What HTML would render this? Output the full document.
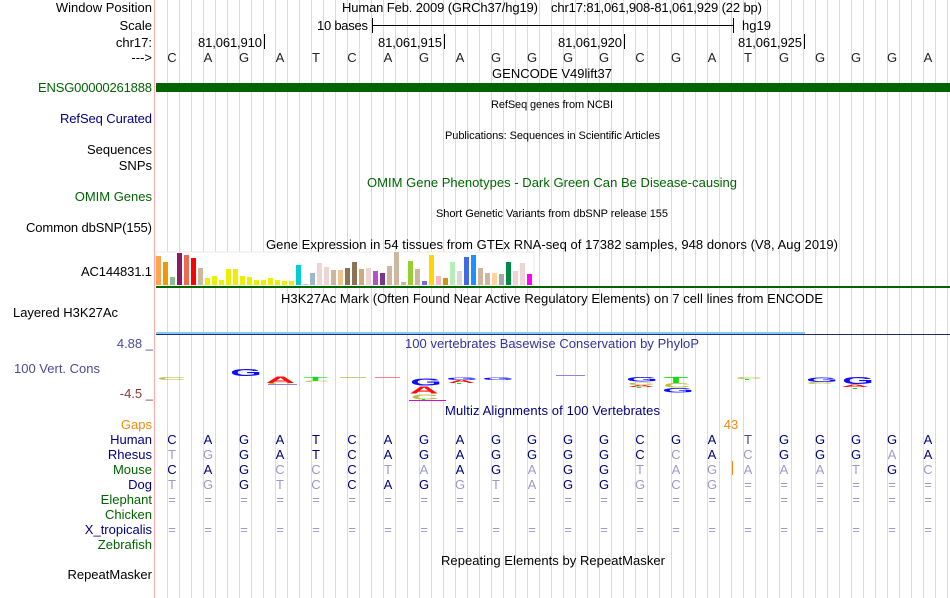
<!DOCTYPE html>
<html><head><meta charset="utf-8"><style>
html,body{margin:0;padding:0;background:#fff;width:950px;height:598px;overflow:hidden}
svg{display:block}
text{font-family:"Liberation Sans",sans-serif;font-size:13px;fill:#000}
.r{text-anchor:end}.m{text-anchor:middle}
.s{font-size:11px}
.n{fill:#000080}.g{fill:#006400}.o{fill:#ee8a10}
.d{fill:#000080;text-anchor:middle}.l{fill:#9a9ac8;text-anchor:middle}
.k{fill:#222;text-anchor:middle}
.L{font-size:12px;font-weight:bold;text-anchor:middle}
.B{fill:#0000ff}.R{fill:#ff0000}.Y{fill:#b8b83c}.T{fill:#00e000}
.bars rect{width:5px}
</style></head><body>
<svg width="950" height="598" viewBox="0 0 950 598" xmlns="http://www.w3.org/2000/svg">
<defs><pattern id="p" x="167" y="0" width="12" height="598" patternUnits="userSpaceOnUse"><rect x="0" y="0" width="1" height="598" fill="#d9d8f2"/></pattern></defs>
<rect x="167" y="0" width="781" height="598" fill="url(#p)"/>
<rect x="154" y="0" width="1" height="598" fill="#ffaaaa"/>

<!-- left labels -->
<text class="r" x="152" y="12">Window Position</text>
<text class="r" x="152" y="30">Scale</text>
<text class="r" x="152" y="47">chr17:</text>
<text class="r" x="152" y="62">---&gt;</text>
<text class="g" x="38" y="92" textLength="114">ENSG00000261888</text>
<text class="n" x="60" y="123" textLength="92">RefSeq Curated</text>
<text class="r" x="152" y="154">Sequences</text>
<text class="r" x="152" y="170">SNPs</text>
<text class="r g" x="152" y="201">OMIM Genes</text>
<text x="26" y="232" textLength="126">Common dbSNP(155)</text>
<text x="81" y="276" textLength="71">AC144831.1</text>
<text x="13" y="317" textLength="105">Layered H3K27Ac</text>
<text x="14" y="373" style="fill:#4a4a9a">100 Vert. Cons</text>
<text class="r" x="153" y="348" style="fill:#4a4a9a">4.88 _</text>
<text class="r" x="153" y="398" style="fill:#8b3a3a">-4.5 _</text>
<text class="r o" x="152" y="429">Gaps</text>
<text class="r n" x="152" y="444">Human</text>
<text class="r n" x="152" y="459">Rhesus</text>
<text class="r g" x="152" y="474">Mouse</text>
<text class="r n" x="152" y="489">Dog</text>
<text class="r g" x="152" y="504">Elephant</text>
<text class="r g" x="152" y="519">Chicken</text>
<text class="r n" x="152" y="534">X_tropicalis</text>
<text class="r g" x="152" y="549">Zebrafish</text>
<text class="r" x="152" y="579">RepeatMasker</text>

<!-- header -->
<text x="342" y="12" textLength="196">Human Feb. 2009 (GRCh37/hg19)</text>
<text x="551" y="12" textLength="211">chr17:81,061,908-81,061,929 (22 bp)</text>
<text x="317" y="30" textLength="51">10 bases</text>
<text x="742" y="30">hg19</text>
<rect x="372" y="18" width="1" height="15" fill="#000"/>
<rect x="372" y="25" width="361" height="1" fill="#000"/>
<rect x="733" y="18" width="1" height="15" fill="#000"/>
<text x="198" y="47" textLength="64">81,061,910</text><rect x="264" y="34" width="1" height="15" fill="#000"/>
<text x="378" y="47" textLength="64">81,061,915</text><rect x="444" y="34" width="1" height="15" fill="#000"/>
<text x="558" y="47" textLength="64">81,061,920</text><rect x="624" y="34" width="1" height="15" fill="#000"/>
<text x="738" y="47" textLength="64">81,061,925</text><rect x="804" y="34" width="1" height="15" fill="#000"/>
<text class="k" x="172 208 244 280 316 352 388 424 460 496 532 568 604 640 676 712 748 784 820 856 892 928" y="62">CAGATCAGAGGGGCGATGGGGA</text>

<text class="m" x="552" y="78">GENCODE V49lift37</text>
<rect x="156" y="83" width="794" height="9" fill="#006400"/>
<text class="s" x="491" y="108" textLength="122">RefSeq genes from NCBI</text>
<text class="s" x="445" y="139" textLength="215">Publications: Sequences in Scientific Articles</text>
<text class="g" x="367" y="187" textLength="370">OMIM Gene Phenotypes - Dark Green Can Be Disease-causing</text>
<text class="s" x="436" y="217" textLength="232">Short Genetic Variants from dbSNP release 155</text>
<text x="266" y="249" textLength="572">Gene Expression in 54 tissues from GTEx RNA-seq of 17382 samples, 948 donors (V8, Aug 2019)</text>

<!-- GTEx bars -->
<rect x="156" y="252" width="378" height="33" fill="#fff" stroke="#e8e8e8" stroke-width="1"/>
<g>
<rect x="156" y="256" width="5" height="29" fill="#FFA54F"/>
<rect x="163" y="262" width="5" height="23" fill="#EE9A00"/>
<rect x="170" y="277" width="5" height="8" fill="#8FBC8F"/>
<rect x="177" y="253" width="5" height="32" fill="#8B1C62"/>
<rect x="184" y="255" width="5" height="30" fill="#EE6A50"/>
<rect x="191" y="258" width="5" height="27" fill="#FF0000"/>
<rect x="198" y="268" width="5" height="17" fill="#CDB79E"/>
<rect x="205" y="278" width="5" height="7" fill="#EEEE00"/>
<rect x="212" y="276" width="5" height="9" fill="#EEEE00"/>
<rect x="219" y="280" width="5" height="5" fill="#EEEE00"/>
<rect x="226" y="269" width="5" height="16" fill="#EEEE00"/>
<rect x="233" y="269" width="5" height="16" fill="#EEEE00"/>
<rect x="240" y="276" width="5" height="9" fill="#EEEE00"/>
<rect x="247" y="277" width="5" height="8" fill="#EEEE00"/>
<rect x="254" y="280" width="5" height="5" fill="#EEEE00"/>
<rect x="261" y="280" width="5" height="5" fill="#EEEE00"/>
<rect x="268" y="278" width="5" height="7" fill="#EEEE00"/>
<rect x="275" y="280" width="5" height="5" fill="#EEEE00"/>
<rect x="282" y="281" width="5" height="4" fill="#EEEE00"/>
<rect x="289" y="281" width="5" height="4" fill="#EEEE00"/>
<rect x="296" y="265" width="5" height="20" fill="#00CED1"/>
<rect x="303" y="284" width="5" height="1" fill="#B4CDCD"/>
<rect x="310" y="273" width="5" height="12" fill="#9FB6CD"/>
<rect x="317" y="263" width="5" height="22" fill="#EED5D2"/>
<rect x="324" y="267" width="5" height="18" fill="#EED5D2"/>
<rect x="331" y="270" width="5" height="15" fill="#CDB79E"/>
<rect x="338" y="270" width="5" height="15" fill="#EEC591"/>
<rect x="345" y="268" width="5" height="17" fill="#8B7355"/>
<rect x="352" y="262" width="5" height="23" fill="#8B7355"/>
<rect x="359" y="269" width="5" height="16" fill="#CDAA7D"/>
<rect x="366" y="268" width="5" height="17" fill="#EED5D2"/>
<rect x="373" y="271" width="5" height="14" fill="#B452CD"/>
<rect x="380" y="273" width="5" height="12" fill="#7A378B"/>
<rect x="387" y="266" width="5" height="19" fill="#CDB79E"/>
<rect x="394" y="252" width="5" height="33" fill="#CDB79E"/>
<rect x="401" y="282" width="5" height="3" fill="#CDB79E"/>
<rect x="408" y="261" width="5" height="24" fill="#9ACD32"/>
<rect x="415" y="269" width="5" height="16" fill="#CDB79E"/>
<rect x="422" y="281" width="5" height="4" fill="#7A67EE"/>
<rect x="429" y="255" width="5" height="30" fill="#FFD700"/>
<rect x="436" y="276" width="5" height="9" fill="#FFB6C1"/>
<rect x="443" y="278" width="5" height="7" fill="#CD950C"/>
<rect x="450" y="262" width="5" height="23" fill="#B4EEB4"/>
<rect x="457" y="271" width="5" height="14" fill="#D9D9D9"/>
<rect x="464" y="257" width="5" height="28" fill="#4169E1"/>
<rect x="471" y="255" width="5" height="30" fill="#1E90FF"/>
<rect x="478" y="268" width="5" height="17" fill="#CDB79E"/>
<rect x="485" y="273" width="5" height="12" fill="#CDB79E"/>
<rect x="492" y="273" width="5" height="12" fill="#FFD39B"/>
<rect x="499" y="274" width="5" height="11" fill="#A6A6A6"/>
<rect x="506" y="262" width="5" height="23" fill="#008B45"/>
<rect x="513" y="271" width="5" height="14" fill="#EED5D2"/>
<rect x="520" y="263" width="5" height="22" fill="#EED5D2"/>
<rect x="527" y="274" width="5" height="11" fill="#FF00FF"/>
</g>
<rect x="156" y="286" width="794" height="2" fill="#006400"/>

<text x="281" y="303" textLength="542">H3K27Ac Mark (Often Found Near Active Regulatory Elements) on 7 cell lines from ENCODE</text>
<rect x="156" y="332" width="649" height="2" fill="#80ccf8"/>
<rect x="156" y="334" width="794" height="1" fill="#1a2a80"/>
<text x="405" y="348" textLength="294" style="fill:#333399">100 vertebrates Basewise Conservation by PhyloP</text>

<!-- logo -->
<g opacity=".95">
<text class="L Y" transform="translate(171.5 380) scale(3.3 .38)">C</text>
<text class="L B" transform="translate(246 376) scale(3.4 .82)">G</text>
<text class="L Y" transform="translate(280.5 384.5) scale(3.1 .2)">C</text>
<text class="L R" transform="translate(280.5 383) scale(3.4 .75)">A</text>
<rect x="268" y="384" width="29" height="1" fill="#8080e0"/>
<text class="L T" transform="translate(315.5 381) scale(3.3 .42)">T</text>
<text class="L Y" transform="translate(317 382) scale(3.1 .15)">C</text>
<rect x="340" y="377" width="26" height="1" fill="#c8c878"/>
<rect x="375" y="377" width="25" height="1" fill="#f08080"/>
<text class="L B" transform="translate(426 385.7) scale(3.4 .85)">G</text>
<text class="L R" transform="translate(424 393.7) scale(3.4 .85)">A</text>
<text class="L Y" transform="translate(425 399.5) scale(3.2 .62)">C</text>
<rect x="409" y="400" width="37" height="1" fill="#d000d0"/>
<rect x="422" y="399" width="3" height="1" fill="#00e000"/>
<text class="L B" transform="translate(462 380) scale(3.4 .32)">G</text>
<text class="L R" transform="translate(461.5 383) scale(3.2 .35)">A</text>
<rect x="457" y="383" width="4" height="1" fill="#00e000"/>
<text class="L B" transform="translate(498 380) scale(3.4 .32)">G</text>
<rect x="556" y="375" width="29" height="1" fill="#8080e8"/>
<text class="L B" transform="translate(642 381.7) scale(3.4 .55)">G</text>
<text class="L Y" transform="translate(641 385) scale(3.1 .27)">C</text>
<text class="L R" transform="translate(641 387) scale(3.1 .2)">A</text>
<rect x="637" y="387" width="4" height="1" fill="#00e000"/>
<text class="L T" transform="translate(676 383) scale(3.3 .7)">T</text>
<text class="L Y" transform="translate(677 387.7) scale(3.1 .5)">C</text>
<text class="L B" transform="translate(678 392.5) scale(3.4 .5)">G</text>
<text class="L Y" transform="translate(749 379) scale(3.1 .23)">C</text>
<rect x="745" y="379" width="4" height="1" fill="#00e000"/>
<text class="L B" transform="translate(822 382) scale(3.4 .55)">G</text>
<text class="L Y" transform="translate(820 384) scale(3.1 .2)">C</text>
<text class="L B" transform="translate(858 384) scale(3.4 .82)">G</text>
<text class="L R" transform="translate(855 387) scale(3.2 .31)">A</text>
<rect x="853" y="388" width="4" height="1" fill="#00e000"/>
</g>

<text x="445" y="415" textLength="215" class="n">Multiz Alignments of 100 Vertebrates</text>
<text class="m o" x="731" y="429">43</text>
<rect x="732" y="461" width="1" height="14" fill="#ee8a10"/>

<!-- alignment -->
<text class="d" x="172 208 244 280 316 352 388 424 460 496 532 568 604 640 676 712 784 820 856 892 928" y="444">CAGATCAGAGGGGCGAGGGGA</text>
<text x="748" y="444" text-anchor="middle" style="fill:#4a4a9a">T</text>

<text class="l" x="172 208 676 748 892" y="459">TGCCA</text>
<text class="d" x="244 280 316 352 388 424 460 496 532 568 604 640 712 784 820 856 928" y="459">GATCAGAGGGGCAGGGA</text>

<text class="d" x="172 208 244 352 460 496 568 604 892" y="474">CAGCAGGGG</text>
<text class="l" x="280 316 388 424 532 640 676 712 748 784 820 856 928" y="474">CCTAATAGAAATC</text>

<text class="l" x="172 208 280 316 460 496 532 640 676 712" y="489">TGTCGTAGCG</text>
<text class="d" x="244 352 388 424 568 604" y="489">GCAGGG</text>
<text class="l" x="748 784 820 856 892 928" y="489">======</text>

<text class="l" x="172 208 244 280 316 352 388 424 460 496 532 568 604 640 676 712 748 784 820 856 892 928" y="504">======================</text>
<text class="l" x="172 208 244 280 316 352 388 424 460 496 532 568 604 640 676 712 748 784 820 856 892 928" y="534">======================</text>

<text x="441" y="565" textLength="224">Repeating Elements by RepeatMasker</text>
</svg>
</body></html>
